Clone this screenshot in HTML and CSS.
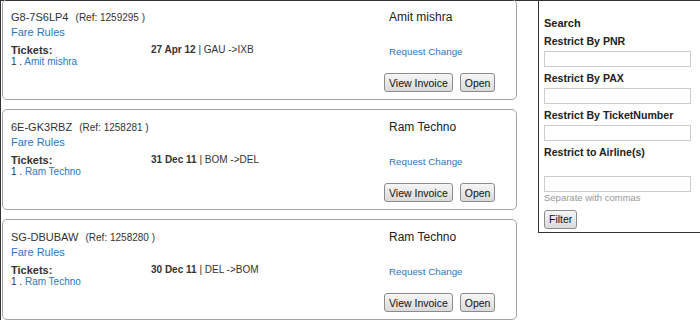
FILE: index.html
```html
<!DOCTYPE html>
<html>
<head>
    <title>My Bookings</title>
    <link rel="stylesheet" href="styles.css">
</head>
<body>
    <div class="page">
        <div class="bookings">
            <div class="card">
                <div class="main">
                    <div class="pnr">G8-7S6LP4 <span class="ref">(Ref: 1259295 )</span></div>
                    <a class="fare" href="#">Fare Rules</a>
                    <div class="trip">
                        <div class="tickets">
                            <b>Tickets:</b>
                            <div class="pax">1 . <a href="#">Amit mishra</a></div>
                        </div>
                        <div class="date"><b>27 Apr 12</b> | GAU -&gt;IXB</div>
                    </div>
                </div>
                <div class="side">
                    <div class="name">Amit mishra</div>
                    <a class="change" href="#">Request Change</a>
                    <div class="actions">
                        <button class="btn">View Invoice</button>
                        <button class="btn">Open</button>
                    </div>
                </div>
            </div>

            <div class="card">
                <div class="main">
                    <div class="pnr">6E-GK3RBZ <span class="ref">(Ref: 1258281 )</span></div>
                    <a class="fare" href="#">Fare Rules</a>
                    <div class="trip">
                        <div class="tickets">
                            <b>Tickets:</b>
                            <div class="pax">1 . <a href="#">Ram Techno</a></div>
                        </div>
                        <div class="date"><b>31 Dec 11</b> | BOM -&gt;DEL</div>
                    </div>
                </div>
                <div class="side">
                    <div class="name">Ram Techno</div>
                    <a class="change" href="#">Request Change</a>
                    <div class="actions">
                        <button class="btn">View Invoice</button>
                        <button class="btn">Open</button>
                    </div>
                </div>
            </div>

            <div class="card">
                <div class="main">
                    <div class="pnr">SG-DBUBAW <span class="ref">(Ref: 1258280 )</span></div>
                    <a class="fare" href="#">Fare Rules</a>
                    <div class="trip">
                        <div class="tickets">
                            <b>Tickets:</b>
                            <div class="pax">1 . <a href="#">Ram Techno</a></div>
                        </div>
                        <div class="date"><b>30 Dec 11</b> | DEL -&gt;BOM</div>
                    </div>
                </div>
                <div class="side">
                    <div class="name">Ram Techno</div>
                    <a class="change" href="#">Request Change</a>
                    <div class="actions">
                        <button class="btn">View Invoice</button>
                        <button class="btn">Open</button>
                    </div>
                </div>
            </div>
        </div>

        <div class="search">
            <div class="search-title">Search</div>
            <label>Restrict By PNR</label>
            <input type="text">
            <label>Restrict By PAX</label>
            <input type="text">
            <label>Restrict By TicketNumber</label>
            <input type="text">
            <label>Restrict to Airline(s)</label>
            <input type="text" class="airline">
            <div class="hint">Separate with commas</div>
            <div><button class="btn">Filter</button></div>
        </div>
    </div>
</body>
</html>
```

FILE: styles.css
```css
body {
    margin: 0;
    font-family: "Liberation Sans", Arial, sans-serif;
    color: #333;
    background-color: white;
}

a {
    color: #2b76bd;
    text-decoration: none;
}

.page {
    display: flex;
    align-items: flex-start;
    border-top: 1px solid #333;
}

.bookings {
    width: 515px;
    margin-top: -2px;
    border-left: 1px solid #333;
    padding-left: 1px;
}

.card {
    display: flex;
    box-sizing: border-box;
    height: 101px;
    margin-bottom: 9px;
    padding: 10px 20px 7px 8px;
    border: 1px solid #a3a3a3;
    border-radius: 5px;
}

.main {
    flex: 1;
}

.pnr {
    font-size: 11px;
    line-height: 15px;
}

.ref {
    font-size: 10px;
    margin-left: 4px;
}

.fare {
    display: block;
    font-size: 11px;
    line-height: 15px;
}

.trip {
    display: flex;
    margin-top: 4px;
}

.tickets {
    width: 140px;
}

.tickets b {
    display: block;
    font-size: 11px;
    line-height: 12px;
}

.pax {
    font-size: 10px;
    line-height: 12px;
}

.date {
    font-size: 10px;
    line-height: 12px;
}

.side {
    width: 112px;
    display: flex;
    flex-direction: column;
}

.name {
    font-size: 12px;
    line-height: 15px;
    color: #222;
    margin-left: 5px;
}

.change {
    font-size: 9.8px;
    line-height: 12px;
    margin: 21px 0 0 5px;
}

.actions {
    margin-top: auto;
    display: flex;
    gap: 7px;
}

.btn {
    height: 19px;
    padding: 0 4px;
    font-family: "Liberation Sans", Arial, sans-serif;
    font-size: 10.5px;
    color: #111;
    background: linear-gradient(#f6f6f6, #dadada);
    border: 1px solid #8c8c8c;
    border-radius: 3px;
}

.search {
    flex: 1;
    margin-left: 21px;
    display: flex;
    flex-direction: column;
    padding: 15px 0 3px 5px;
    border-left: 1px solid #333;
    border-bottom: 1px solid #333;
}

.search-title {
    font-size: 11px;
    line-height: 14px;
    font-weight: bold;
    color: #222;
}

.search label {
    font-size: 10.6px;
    line-height: 14px;
    font-weight: bold;
    color: #222;
    margin: 4px 0 3px;
}

.search input {
    box-sizing: border-box;
    width: 147px;
    height: 16px;
    margin: 0;
    border: 1px solid #ccc;
    background-color: white;
}

.search .airline {
    margin-top: 14px;
}

.hint {
    font-size: 9.5px;
    line-height: 12px;
    color: #999;
    margin-bottom: 5px;
}
```
